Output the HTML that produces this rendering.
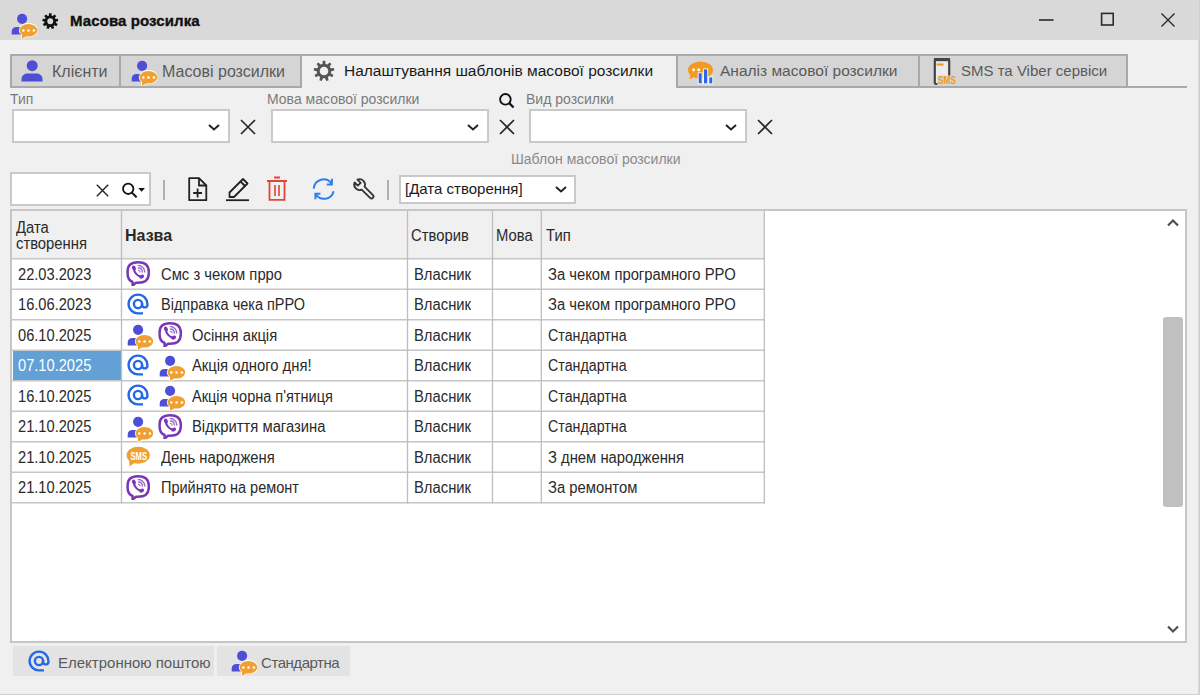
<!DOCTYPE html>
<html><head><meta charset="utf-8">
<style>
*{box-sizing:border-box;margin:0;padding:0}
html,body{width:1200px;height:695px;overflow:hidden;background:#f0f0f0;font-family:"Liberation Sans",sans-serif;color:#222}
.a{position:absolute}
.t{position:absolute;white-space:nowrap;line-height:1}
svg{position:absolute;overflow:visible}
#title{left:0;top:0;width:1200px;height:40px;background:#d9d9d9}
.tab{position:absolute;top:54px;height:34px;background:#d5d5d5;border:2px solid #a9a9a9;border-bottom:none}
.combo{position:absolute;background:#fff;border:2px solid #c9c9c9}
.lbl{color:#7a7a7a;font-size:14px}
.gl{position:absolute;background:#cdcdcd}
.cell{font-size:16px;color:#2a2a2a;transform:scaleX(.925);transform-origin:0 0}
</style></head><body>
<svg width="0" height="0" style="position:absolute">
<defs>
<symbol id="pb" viewBox="0 0 26 26">
<circle cx="11.1" cy="5.8" r="5.1" fill="#4f4fd6"/>
<path d="M0.7 21.6V18.4C0.7 15.8 2.6 14 5.4 14H12V21.6Z" fill="#4f4fd6"/>
<g fill="#f0a030" stroke="#fff" stroke-width="1.6"><ellipse cx="17.4" cy="17.2" rx="8.8" ry="6.3"/><path d="M10.8 19.5L11.2 25.9L16.8 22.2Z"/></g>
<g fill="#f0a030"><ellipse cx="17.4" cy="17.2" rx="8.8" ry="6.3"/><path d="M10.8 19.5L11.2 25.9L16.8 22.2Z"/></g>
<circle cx="12.3" cy="17.5" r="1.25" fill="#fff"/><circle cx="17.5" cy="17.5" r="1.25" fill="#fff"/><circle cx="22.9" cy="17.5" r="1.25" fill="#fff"/>
</symbol>
<symbol id="vb" viewBox="0 0 24 26">
<path d="M12 2.2C5 2.2 1.6 5.2 1.6 11.4V13.4C1.6 18 3.6 20.8 6.6 21.9V25.6L10 22.7H12C19 22.7 22.8 19.7 22.8 13.4V11.4C22.8 5.2 19 2.2 12 2.2Z" fill="none" stroke="#7a36b6" stroke-width="2.5" stroke-linejoin="round"/>
<path d="M7.9 8.6C8 12.4 11.4 16.2 15.2 16.6" fill="none" stroke="#7a36b6" stroke-width="2.1" stroke-linecap="round"/>
<ellipse cx="7.9" cy="8" rx="1.9" ry="2.5" transform="rotate(-25 7.9 8)" fill="#7a36b6"/>
<ellipse cx="15.7" cy="16.6" rx="2.5" ry="1.9" transform="rotate(-25 15.7 16.6)" fill="#7a36b6"/>
<path d="M12.4 5.6A6.6 6.6 0 0 1 18.8 12" fill="none" stroke="#9a72cc" stroke-width="1.5" stroke-linecap="round"/>
<path d="M12.4 8A4.2 4.2 0 0 1 16.4 12" fill="none" stroke="#9a72cc" stroke-width="1.4" stroke-linecap="round"/>
<path d="M12.4 10.3A1.9 1.9 0 0 1 14.1 12" fill="none" stroke="#9a72cc" stroke-width="1.2" stroke-linecap="round"/>
</symbol>
<symbol id="at" viewBox="0 0 22 22">
<circle cx="11" cy="11" r="4.1" fill="none" stroke="#2468e6" stroke-width="2.4"/>
<path d="M16 20.4H11A9.4 9.4 0 1 1 20.4 11V12.2A2.7 2.7 0 0 1 15.1 12.2V10.5" fill="none" stroke="#2468e6" stroke-width="2.4"/>
</symbol>
<symbol id="sms" viewBox="0 0 24 24">
<ellipse cx="12.2" cy="9.3" rx="11.6" ry="8.5" fill="#f0a030"/>
<path d="M3.2 13.5L3.5 20.4L9.5 16.2Z" fill="#f0a030"/>
<text x="4.4" y="14" font-family="Liberation Sans" font-size="11" font-weight="700" fill="#fff" textLength="16.6" lengthAdjust="spacingAndGlyphs">SMS</text>
</symbol>
<symbol id="gear" viewBox="0 0 24 24"><path d="M10.36 4.27 L10.67 0.88 L13.33 0.88 L13.64 4.27 L15.71 5.02 L18.13 2.63 L20.16 4.33 L18.23 7.14 L19.32 9.04 L22.72 8.76 L23.18 11.37 L19.90 12.28 L19.51 14.44 L22.29 16.41 L20.97 18.71 L17.87 17.29 L16.19 18.70 L17.05 22.00 L14.56 22.90 L13.10 19.82 L10.90 19.82 L9.44 22.90 L6.95 22.00 L7.81 18.70 L6.13 17.29 L3.03 18.71 L1.71 16.41 L4.49 14.44 L4.10 12.28 L0.82 11.37 L1.28 8.76 L4.68 9.04 L5.77 7.14 L3.84 4.33 L5.87 2.63 L8.29 5.02ZM12 7.3A4.7 4.7 0 1 0 12 16.7A4.7 4.7 0 1 0 12 7.3Z" fill="currentColor" fill-rule="evenodd"/></symbol>
<symbol id="gearb" viewBox="0 0 24 24"><path d="M9.97 3.85 L10.19 0.54 L13.81 0.54 L14.03 3.85 L15.68 4.45 L17.97 2.06 L20.75 4.39 L18.80 7.06 L19.67 8.58 L22.97 8.22 L23.60 11.80 L20.38 12.59 L20.07 14.32 L22.83 16.16 L21.01 19.30 L18.04 17.84 L16.70 18.96 L17.62 22.15 L14.21 23.39 L12.88 20.35 L11.12 20.35 L9.79 23.39 L6.38 22.15 L7.30 18.96 L5.96 17.84 L2.99 19.30 L1.17 16.16 L3.93 14.32 L3.62 12.59 L0.40 11.80 L1.03 8.22 L4.33 8.58 L5.20 7.06 L3.25 4.39 L6.03 2.06 L8.32 4.45ZM12 7.7A4.3 4.3 0 1 0 12 16.3A4.3 4.3 0 1 0 12 7.7Z" fill="currentColor" fill-rule="evenodd"/></symbol>
</defs>
</svg>

<!-- title bar -->
<div id="title"></div>
<svg style="left:10.5px;top:12.5px" width="26" height="26"><use href="#pb"/></svg>
<svg style="left:42.3px;top:12.5px;color:#111" width="16.5" height="16.5"><use href="#gearb"/></svg>
<div class="t" style="left:70px;top:13px;font-size:15px;font-weight:700;color:#111;letter-spacing:.1px;-webkit-text-stroke:.35px #111">Масова розсилка</div>
<svg style="left:1039px;top:15px" width="15" height="10"><path d="M0 5H14.5" stroke="#2a2a2a" stroke-width="1.6"/></svg>
<svg style="left:1100px;top:12px" width="16" height="16"><rect x="1.6" y="1.4" width="11.6" height="11.6" fill="none" stroke="#2a2a2a" stroke-width="1.6"/></svg>
<svg style="left:1161px;top:12.5px" width="14" height="14"><path d="M0.5 0.5L13.5 13.5M13.5 0.5L0.5 13.5" stroke="#2a2a2a" stroke-width="1.4"/></svg>
<div class="a" style="left:1198px;top:0;width:2px;height:695px;background:linear-gradient(to right,#dedede,#cbcbcb)"></div>
<div class="a" style="left:0;top:694px;width:1200px;height:1px;background:#d0d0d0"></div>

<!-- tabs -->
<div class="tab" style="left:10px;width:111px"></div>
<div class="tab" style="left:119px;width:183px"></div>
<div class="tab" style="left:302px;width:376px;background:#f0f0f0;height:36px;border-left:none;border-right:none"></div>
<div class="tab" style="left:676px;width:244px"></div>
<div class="tab" style="left:918px;width:210px"></div>
<div class="a" style="left:10px;top:86px;width:292px;height:2px;background:#a9a9a9"></div>
<div class="a" style="left:676px;top:86px;width:511px;height:2px;background:#a9a9a9"></div>
<svg style="left:21px;top:60px" width="22" height="22" viewBox="0 0 22 22"><circle cx="11.2" cy="5.7" r="5.5" fill="#4f4fd6"/><path d="M0.5 21.5V19C0.5 15.5 3.5 13.5 7 13.5H15C18.5 13.5 21.5 15.5 21.5 19V21.5Z" fill="#4f4fd6"/></svg>
<div class="t" style="left:52px;top:63.5px;font-size:16px;color:#5a5a5a">Клієнти</div>
<svg style="left:131px;top:60px" width="26" height="26"><use href="#pb"/></svg>
<div class="t" style="left:162px;top:63.5px;font-size:16px;color:#5a5a5a">Масові розсилки</div>
<svg style="left:312.5px;top:60.3px;color:#555" width="22" height="22"><use href="#gear"/></svg>
<div class="t" style="left:344px;top:63px;font-size:15.5px;color:#1a1a1a">Налаштування шаблонів масової розсилки</div>
<svg style="left:683px;top:56px" width="36" height="32" viewBox="0 0 36 32"><ellipse cx="17.5" cy="14" rx="12.5" ry="8.6" fill="#f39a22"/><path d="M7.5 18L6.8 23.5L13 20Z" fill="#f39a22"/><circle cx="10.6" cy="13.8" r="1.5" fill="#fff"/><circle cx="15.7" cy="13.8" r="1.5" fill="#fff"/><rect x="14.7" y="16.3" width="5" height="12" fill="#fff" opacity=".85"/><rect x="20" y="12.4" width="5.2" height="16" fill="#fff" opacity=".85"/><rect x="25.3" y="20.4" width="5" height="8" fill="#fff" opacity=".85"/><rect x="15.7" y="17.3" width="3" height="10" fill="#2a66ec"/><rect x="21" y="13.4" width="3.2" height="14" fill="#2a66ec"/><rect x="26.3" y="21.4" width="3" height="6" fill="#2a66ec"/></svg>
<div class="t" style="left:720px;top:63px;font-size:15.5px;color:#5a5a5a">Аналіз масової розсилки</div>
<svg style="left:928px;top:55px" width="32" height="33" viewBox="0 0 32 33"><rect x="6.8" y="4" width="14.4" height="25" rx="1.2" fill="#ececec" stroke="#454545" stroke-width="2.2"/><rect x="6" y="3" width="16" height="3.2" fill="#454545"/><rect x="8.6" y="8.4" width="7" height="2.2" fill="#f39a22"/><rect x="9.4" y="20.5" width="19" height="10" fill="#d5d5d5"/><text x="10" y="29" font-family="Liberation Sans" font-size="10.5" font-weight="700" fill="#f39a22" textLength="18" lengthAdjust="spacingAndGlyphs">SMS</text></svg>
<div class="t" style="left:961px;top:63px;font-size:15px;color:#5a5a5a">SMS та Viber сервіси</div>

<!-- filters -->
<div class="t lbl" style="left:10px;top:92px">Тип</div>
<div class="t lbl" style="left:267px;top:92px">Мова масової розсилки</div>
<div class="t lbl" style="left:526px;top:92px">Вид розсилки</div>
<div class="combo" style="left:12px;top:109px;width:218px;height:34px"></div>
<div class="combo" style="left:271px;top:109px;width:218px;height:34px"></div>
<div class="combo" style="left:529px;top:109px;width:218px;height:34px"></div>
<svg style="left:208px;top:124px" width="12" height="7"><path d="M1 1L6 5.5L11 1" fill="none" stroke="#222" stroke-width="2"/></svg>
<svg style="left:467px;top:124px" width="12" height="7"><path d="M1 1L6 5.5L11 1" fill="none" stroke="#222" stroke-width="2"/></svg>
<svg style="left:725px;top:124px" width="12" height="7"><path d="M1 1L6 5.5L11 1" fill="none" stroke="#222" stroke-width="2"/></svg>
<svg style="left:240px;top:119px" width="16" height="16"><path d="M1 1L15 15M15 1L1 15" stroke="#222" stroke-width="1.6"/></svg>
<svg style="left:499px;top:119px" width="16" height="16"><path d="M1 1L15 15M15 1L1 15" stroke="#222" stroke-width="1.6"/></svg>
<svg style="left:757px;top:119px" width="16" height="16"><path d="M1 1L15 15M15 1L1 15" stroke="#222" stroke-width="1.6"/></svg>
<svg style="left:498px;top:92px" width="17" height="17"><circle cx="7.4" cy="7.3" r="5.3" fill="none" stroke="#111" stroke-width="1.9"/><path d="M11.2 11.1L15.6 15.5" stroke="#111" stroke-width="2.2"/></svg>
<div class="t lbl" style="left:511px;top:152px;color:#8a8a8a">Шаблон масової розсилки</div>

<!-- toolbar -->
<div class="combo" style="left:10px;top:172px;width:141px;height:34px"></div>
<svg style="left:96px;top:184.3px" width="13" height="13"><path d="M0.8 0.8L12.2 12.2M12.2 0.8L0.8 12.2" stroke="#222" stroke-width="1.4"/></svg>
<svg style="left:122px;top:183px" width="24" height="16"><circle cx="6.2" cy="5.8" r="5.2" fill="none" stroke="#111" stroke-width="1.8"/><path d="M9.9 9.6L14.6 14.3" stroke="#111" stroke-width="2"/><path d="M16.2 5H23L19.6 8.8Z" fill="#111"/></svg>
<div class="a" style="left:163px;top:180px;width:2px;height:20px;background:#b0b0b0"></div>
<svg style="left:188px;top:177px" width="20" height="25" viewBox="0 0 20 25"><path d="M1.2 1.2H11L18.3 8.5V23.2H1.2Z" fill="none" stroke="#222" stroke-width="1.8" stroke-linejoin="round"/><path d="M11 1.2V8.5H18.3" fill="none" stroke="#222" stroke-width="1.8"/><path d="M9.6 11.5V20.5M5.2 16H14" stroke="#222" stroke-width="1.8"/></svg>
<svg style="left:225px;top:177px" width="26" height="25" viewBox="0 0 26 25"><path d="M18 2L22.5 6.5L9 20H4.5V15.5Z" fill="none" stroke="#222" stroke-width="1.8" stroke-linejoin="round"/><path d="M15.5 4.5L20 9" stroke="#222" stroke-width="1.8"/><path d="M1 23.2H24" stroke="#222" stroke-width="1.8"/></svg>
<svg style="left:266px;top:176px" width="22" height="26" viewBox="0 0 22 26"><path d="M1 5H21M8 1.5H14" stroke="#e04535" stroke-width="1.8"/><path d="M3.5 5V23.8H18.5V5" fill="none" stroke="#e04535" stroke-width="1.8"/><path d="M9 9V20M13 9V20" stroke="#e04535" stroke-width="1.6"/></svg>
<svg style="left:308px;top:173px" width="32" height="32" viewBox="0 0 32 32"><path d="M5.8 15.6A9.8 9.8 0 0 1 23.6 10.6M23.9 5.8V11.6H18.8" fill="none" stroke="#2f7ef0" stroke-width="2"/><path d="M25.6 18.2A9.8 9.8 0 0 1 7.8 21.3M12.4 20.8H7.4V26.3" fill="none" stroke="#2f7ef0" stroke-width="2"/></svg>
<svg style="left:352px;top:177px" width="24" height="25" viewBox="0 0 24 25"><path d="M5.464 2.636L8.66 5.832L5.832 8.66L2.636 5.464A5.4 5.4 0 0 0 9.736 12.564L18.086 20.914A2 2 0 0 0 20.914 18.086L12.564 9.736A5.4 5.4 0 0 0 5.464 2.636Z" fill="none" stroke="#333" stroke-width="1.8" stroke-linejoin="round"/></svg>
<div class="a" style="left:387px;top:180px;width:2px;height:20px;background:#b0b0b0"></div>
<div class="combo" style="left:399px;top:175px;width:177px;height:29px"></div>
<div class="t" style="left:405px;top:180.5px;font-size:15px;color:#1a1a1a">[Дата створення]</div>
<svg style="left:555px;top:186px" width="12" height="7"><path d="M1 1L6 5.5L11 1" fill="none" stroke="#222" stroke-width="2"/></svg>

<!-- grid -->
<div id="grid" class="a" style="left:10px;top:209px;width:1177px;height:434px;background:#fff;border:2px solid #c6c6c6"></div>
<div class="a" style="left:12px;top:211px;width:753px;height:47px;background:#f0f0f0"></div>
<!-- GRID START -->
<div class="t cell" style="left:16px;top:219.9px">Дата</div>
<div class="t cell" style="left:16px;top:235.9px">створення</div>
<div class="t cell" style="left:125px;top:228.2px;font-weight:700;font-size:16px;transform:none">Назва</div>
<div class="t cell" style="left:411px;top:227.9px">Створив</div>
<div class="t cell" style="left:496px;top:227.9px">Мова</div>
<div class="t cell" style="left:546px;top:227.9px">Тип</div>
<div class="a" style="left:12.8px;top:350.20px;width:108px;height:29.90px;background:#62a0d6"></div>
<svg style="left:0;top:0" width="1200" height="695">
<path d="M12 258.70H765" stroke="#c6c6c6" stroke-width="1.6"/>
<path d="M12 289.20H765" stroke="#c6c6c6" stroke-width="1.6"/>
<path d="M12 319.70H765" stroke="#c6c6c6" stroke-width="1.6"/>
<path d="M12 350.20H765" stroke="#c6c6c6" stroke-width="1.6"/>
<path d="M12 380.70H765" stroke="#c6c6c6" stroke-width="1.6"/>
<path d="M12 411.20H765" stroke="#c6c6c6" stroke-width="1.6"/>
<path d="M12 441.70H765" stroke="#c6c6c6" stroke-width="1.6"/>
<path d="M12 472.20H765" stroke="#c6c6c6" stroke-width="1.6"/>
<path d="M12 502.70H765" stroke="#c6c6c6" stroke-width="1.6"/>
<path d="M121.5 211V503.50" stroke="#bebebe" stroke-width="1.3"/>
<path d="M407.5 211V503.50" stroke="#bebebe" stroke-width="1.3"/>
<path d="M492.5 211V503.50" stroke="#bebebe" stroke-width="1.3"/>
<path d="M541.3 211V503.50" stroke="#bebebe" stroke-width="1.3"/>
<path d="M764.3 211V503.50" stroke="#bebebe" stroke-width="1.3"/>
</svg>
<div class="t cell" style="left:18px;top:266.56px;transform:scaleX(.915)">22.03.2023</div>
<svg style="left:126px;top:260.00px" width="24" height="26"><use href="#vb"/></svg>
<div class="t cell" style="left:161px;top:266.56px">Смс з чеком прро</div>
<div class="t cell" style="left:414px;top:266.56px">Власник</div>
<div class="t cell" style="left:548px;top:266.56px">За чеком програмного РРО</div>
<div class="t cell" style="left:18px;top:297.06px;transform:scaleX(.915)">16.06.2023</div>
<svg style="left:127px;top:292.50px" width="22" height="22"><use href="#at"/></svg>
<div class="t cell" style="left:161px;top:297.06px;transform:scaleX(0.905)">Відправка чека пРРО</div>
<div class="t cell" style="left:414px;top:297.06px">Власник</div>
<div class="t cell" style="left:548px;top:297.06px">За чеком програмного РРО</div>
<div class="t cell" style="left:18px;top:327.56px;transform:scaleX(.915)">06.10.2025</div>
<svg style="left:127px;top:324.00px" width="26" height="26"><use href="#pb"/></svg>
<svg style="left:158px;top:321.00px" width="24" height="26"><use href="#vb"/></svg>
<div class="t cell" style="left:192px;top:327.56px">Осіння акція</div>
<div class="t cell" style="left:414px;top:327.56px">Власник</div>
<div class="t cell" style="left:548px;top:327.56px;transform:scaleX(0.89)">Стандартна</div>
<div class="t cell" style="left:18px;top:358.06px;color:#fff;transform:scaleX(.915)">07.10.2025</div>
<svg style="left:127px;top:353.50px" width="22" height="22"><use href="#at"/></svg>
<svg style="left:159px;top:354.50px" width="26" height="26"><use href="#pb"/></svg>
<div class="t cell" style="left:192px;top:358.06px">Акція одного дня!</div>
<div class="t cell" style="left:414px;top:358.06px">Власник</div>
<div class="t cell" style="left:548px;top:358.06px;transform:scaleX(0.89)">Стандартна</div>
<div class="t cell" style="left:18px;top:388.56px;transform:scaleX(.915)">16.10.2025</div>
<svg style="left:127px;top:384.00px" width="22" height="22"><use href="#at"/></svg>
<svg style="left:159px;top:385.00px" width="26" height="26"><use href="#pb"/></svg>
<div class="t cell" style="left:192px;top:388.56px;transform:scaleX(0.908)">Акція чорна п'ятниця</div>
<div class="t cell" style="left:414px;top:388.56px">Власник</div>
<div class="t cell" style="left:548px;top:388.56px;transform:scaleX(0.89)">Стандартна</div>
<div class="t cell" style="left:18px;top:419.06px;transform:scaleX(.915)">21.10.2025</div>
<svg style="left:127px;top:415.50px" width="26" height="26"><use href="#pb"/></svg>
<svg style="left:158px;top:412.50px" width="24" height="26"><use href="#vb"/></svg>
<div class="t cell" style="left:192px;top:419.06px">Відкриття магазина</div>
<div class="t cell" style="left:414px;top:419.06px">Власник</div>
<div class="t cell" style="left:548px;top:419.06px;transform:scaleX(0.89)">Стандартна</div>
<div class="t cell" style="left:18px;top:449.56px;transform:scaleX(.915)">21.10.2025</div>
<svg style="left:126px;top:446.00px" width="24" height="24"><use href="#sms"/></svg>
<div class="t cell" style="left:161px;top:449.56px">День народженя</div>
<div class="t cell" style="left:414px;top:449.56px">Власник</div>
<div class="t cell" style="left:548px;top:449.56px">З днем народження</div>
<div class="t cell" style="left:18px;top:480.06px;transform:scaleX(.915)">21.10.2025</div>
<svg style="left:126px;top:473.50px" width="24" height="26"><use href="#vb"/></svg>
<div class="t cell" style="left:161px;top:480.06px;transform:scaleX(0.905)">Прийнято на ремонт</div>
<div class="t cell" style="left:414px;top:480.06px">Власник</div>
<div class="t cell" style="left:548px;top:480.06px">За ремонтом</div>
<!-- GRID END -->


<svg style="left:1167px;top:219px" width="12" height="8"><path d="M1 6.5L6 1.5L11 6.5" fill="none" stroke="#505050" stroke-width="2.2"/></svg>
<svg style="left:1167px;top:625px" width="12" height="8"><path d="M1 1.5L6 6.5L11 1.5" fill="none" stroke="#505050" stroke-width="2.2"/></svg>
<div class="a" style="left:1163px;top:317px;width:20px;height:190px;background:#c0c0c0;border-radius:3px"></div>
<div class="a" style="left:13px;top:646px;width:201px;height:30px;background:#e3e3e3"></div>
<svg style="left:28px;top:650px" width="22" height="22"><use href="#at"/></svg>
<div class="t" style="left:58px;top:655px;font-size:15px;color:#5a5a5a">Електронною поштою</div>
<div class="a" style="left:217px;top:646px;width:133px;height:30px;background:#e3e3e3"></div>
<svg style="left:231px;top:650px" width="26" height="26"><use href="#pb"/></svg>
<div class="t" style="left:261px;top:655px;font-size:15px;letter-spacing:-0.45px;color:#5a5a5a">Стандартна</div>
</body></html>
